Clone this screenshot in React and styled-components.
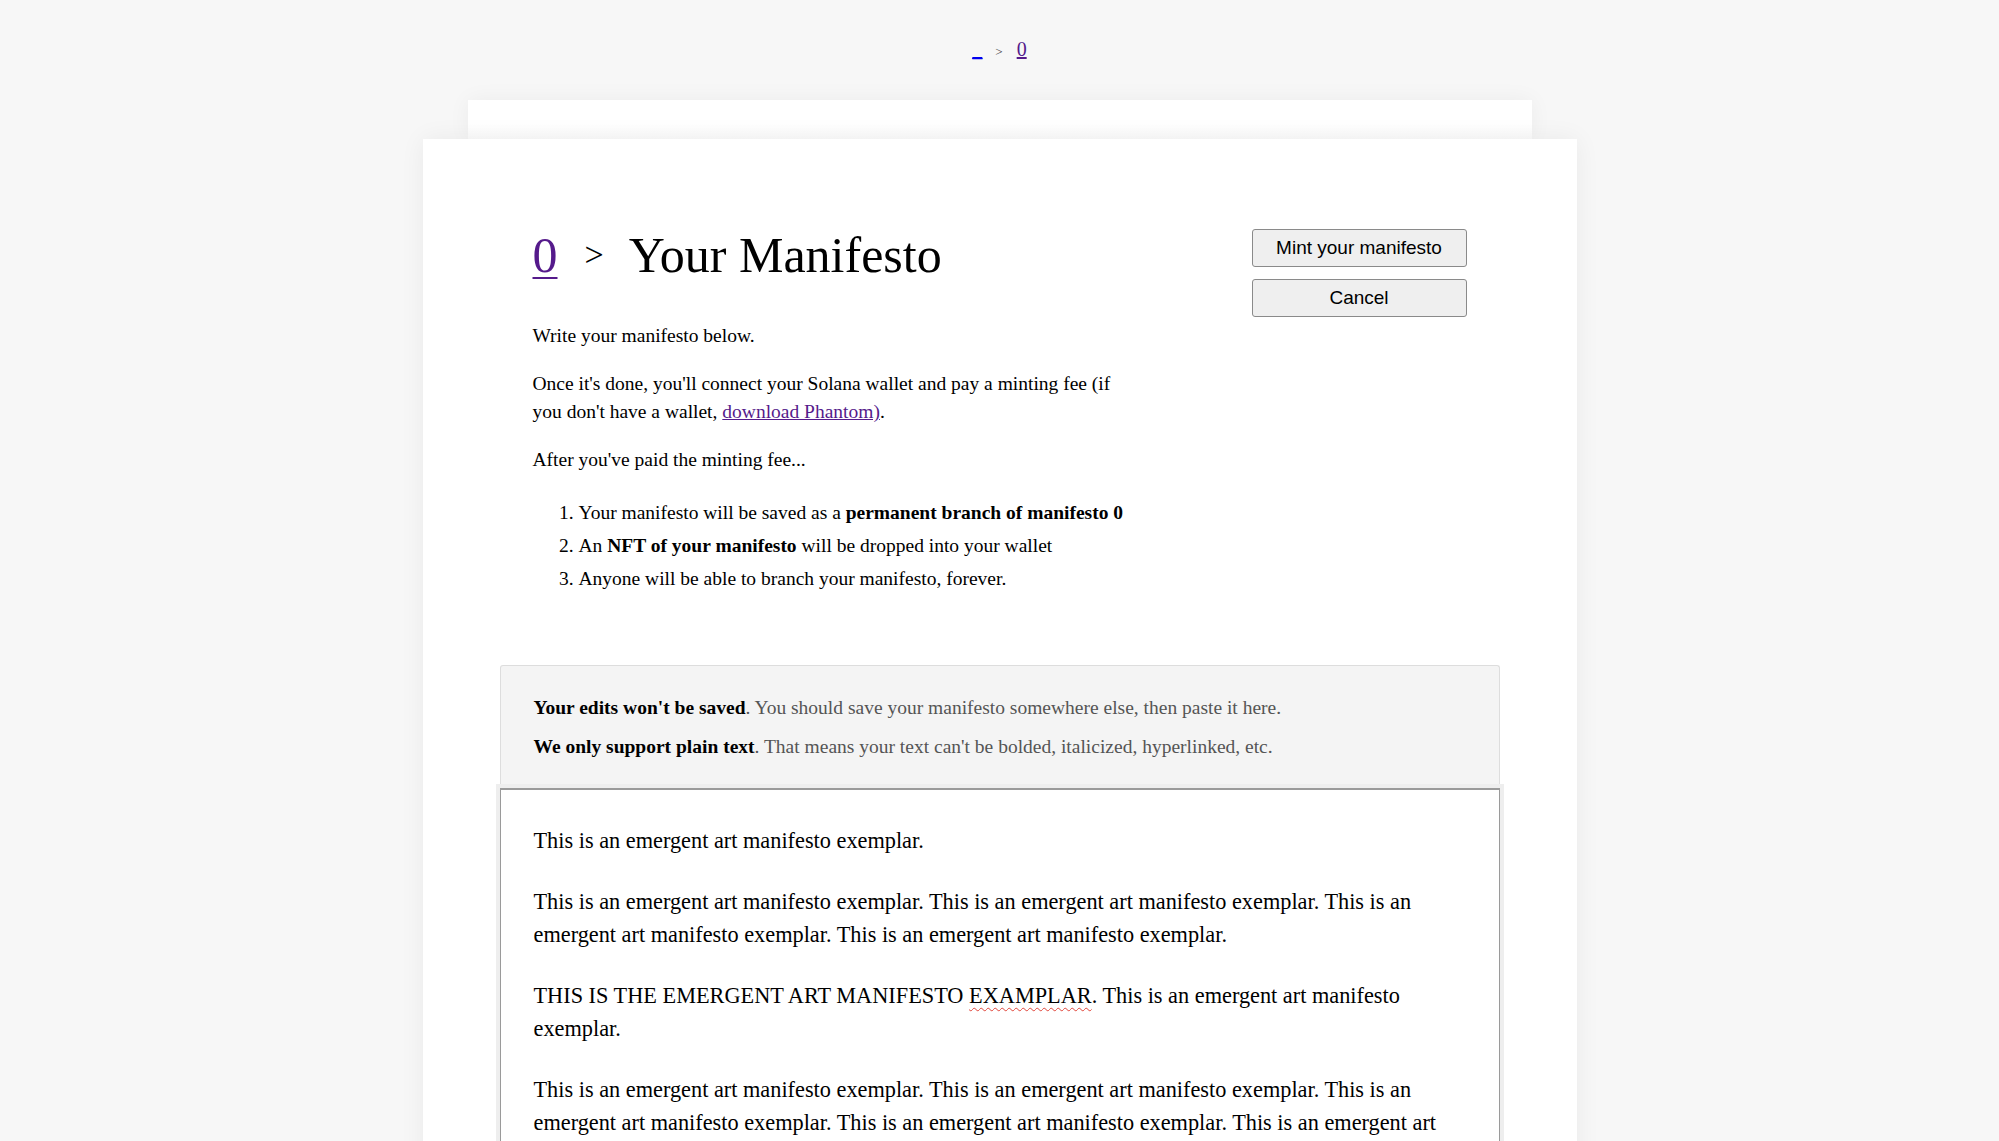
import React from "react"
import styled, { createGlobalStyle } from "styled-components"

const GlobalStyle = createGlobalStyle`
  body {
    margin: 0;
    background: #f7f7f7;
    font-family: "Liberation Serif", "Times New Roman", serif;
    color: #000;
  }
`

const Page = styled.div`
  display: flex;
  flex-direction: column;
  align-items: center;
  min-height: 100vh;
  overflow: hidden;
`

// top breadcrumb "_ > 0"
const Crumbs = styled.nav`
  display: flex;
  align-items: baseline;
  padding: 35px 0 0;
  height: 64px;
  box-sizing: border-box;
  font-size: 20px;
  line-height: 28px;
`

const CrumbLink = styled.a`
  color: ${(p) => (p.$visited ? "#551a8b" : "#0000ee")};
  text-decoration: underline;
`

const CrumbSep = styled.span`
  margin: 0 14px 0 13px;
  font-size: 13px;
  color: #444;
  vertical-align: 3px;
`

const Stack = styled.div`
  display: flex;
  flex-direction: column;
  align-items: center;
  width: 1154px;
  margin-top: 36px;
`

const BackCard = styled.div`
  width: 1064px;
  height: 39px;
  background: linear-gradient(#fff 60%, #fafafa);
  box-shadow: 0 0 22px rgba(0, 0, 0, 0.05);
`

const Card = styled.main`
  width: 100%;
  background: #fff;
  box-shadow: 0 0 24px rgba(0, 0, 0, 0.06);
  padding: 90px 77px 0;
  box-sizing: border-box;
`

const Header = styled.section`
  display: flex;
  justify-content: space-between;
  align-items: flex-start;
  padding: 0 33px;
`

const Intro = styled.div`
  width: 600px;
  font-size: 19.5px;
  line-height: 28px;
`

const Title = styled.h1`
  margin: -3px 0 38px;
  font-size: 50px;
  font-weight: normal;
  line-height: normal;
  white-space: nowrap;
`

const TitleLink = styled.a`
  color: #551a8b;
  text-decoration: underline;
  text-decoration-thickness: 2px;
  text-underline-offset: 5px;
`

const TitleSep = styled.span`
  font-size: 34px;
  margin: 0 25px 0 27px;
  vertical-align: 6px;
`

const Para = styled.p`
  margin: 0 0 ${(p) => p.$gap || 20}px;
`

const InlineLink = styled.a`
  color: #551a8b;
  text-decoration: underline;
`

const Steps = styled.ol`
  margin: 25px 0 0;
  padding-left: 46px;
`

const Step = styled.li`
  margin-bottom: 5px;
`

const Actions = styled.div`
  display: flex;
  flex-direction: column;
  gap: 12px;
  width: 215px;
`

const Button = styled.button`
  height: 38px;
  width: 100%;
  padding: 0;
  background: #efefef;
  border: 1px solid #8a8a8a;
  border-radius: 3px;
  font-family: "Liberation Sans", Arial, sans-serif;
  font-size: 19px;
  color: #000;
  cursor: pointer;
`

const Notice = styled.div`
  margin-top: 67px;
  background: #f4f4f4;
  border: 1px solid #ddd;
  border-bottom: 0;
  border-radius: 3px 3px 0 0;
  padding: 28px 33px 27px;
  font-size: 19.5px;
  line-height: 28px;
  color: #555;

  p {
    margin: 0;
  }
  p + p {
    margin-top: 11px;
  }
  strong {
    color: #000;
  }
`

const Editor = styled.div`
  min-height: 700px;
  background: #fff;
  border: 1px solid #9a9a9a;
  border-top: 2px solid #9a9a9a;
  box-shadow: 0 0 0 4px #eeeeee;
  padding: 34px 33px;
  font-size: 22.3px;
  line-height: 33px;
  outline: none;

  p {
    margin: 0 0 28px;
  }
`

const Misspelt = styled.span`
  text-decoration: underline wavy #e0443a;
  text-decoration-thickness: 1px;
  text-underline-offset: 4px;
`

const sentence = "This is an emergent art manifesto exemplar."

function App() {
  return (
    <>
      <GlobalStyle />
      <Page>
        <Crumbs>
          <CrumbLink href="#">_</CrumbLink>
          <CrumbSep>&gt;</CrumbSep>
          <CrumbLink href="#" $visited>0</CrumbLink>
        </Crumbs>

        <Stack>
          <BackCard />
          <Card>
            <Header>
              <Intro>
                <Title>
                  <TitleLink href="#">0</TitleLink>
                  <TitleSep>&gt;</TitleSep>
                  Your Manifesto
                </Title>
                <Para>Write your manifesto below.</Para>
                <Para>
                  Once it's done, you'll connect your Solana wallet and pay a minting fee (if
                  you don't have a wallet, <InlineLink href="#">download Phantom)</InlineLink>.
                </Para>
                <Para $gap={0}>After you've paid the minting fee...</Para>
                <Steps>
                  <Step>
                    Your manifesto will be saved as a <strong>permanent branch of manifesto 0</strong>
                  </Step>
                  <Step>
                    An <strong>NFT of your manifesto</strong> will be dropped into your wallet
                  </Step>
                  <Step>Anyone will be able to branch your manifesto, forever.</Step>
                </Steps>
              </Intro>
              <Actions>
                <Button>Mint your manifesto</Button>
                <Button>Cancel</Button>
              </Actions>
            </Header>

            <Notice>
              <p>
                <strong>Your edits won't be saved</strong>. You should save your manifesto
                somewhere else, then paste it here.
              </p>
              <p>
                <strong>We only support plain text</strong>. That means your text can't be
                bolded, italicized, hyperlinked, etc.
              </p>
            </Notice>

            <Editor contentEditable suppressContentEditableWarning spellCheck={false}>
              <p>{sentence}</p>
              <p>{[sentence, sentence, sentence, sentence].join(" ")}</p>
              <p>
                THIS IS THE EMERGENT ART MANIFESTO <Misspelt>EXAMPLAR</Misspelt>. This is an
                emergent art manifesto exemplar.
              </p>
              <p>{[sentence, sentence, sentence, sentence, sentence, sentence].join(" ")}</p>
            </Editor>
          </Card>
        </Stack>
      </Page>
    </>
  )
}

export default App
